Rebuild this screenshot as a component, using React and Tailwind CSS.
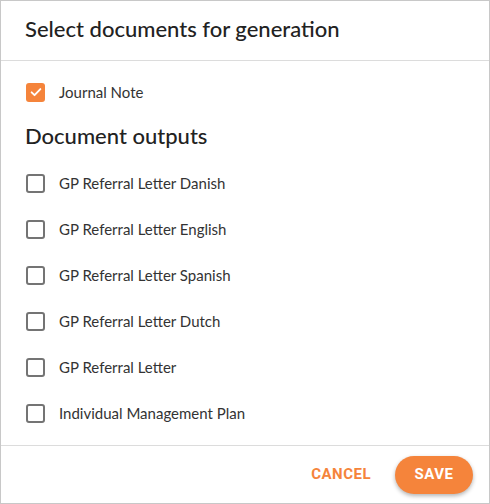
import React, { useState } from 'react';

const outputs = [
    'GP Referral Letter Danish',
    'GP Referral Letter English',
    'GP Referral Letter Spanish',
    'GP Referral Letter Dutch',
    'GP Referral Letter',
    'Individual Management Plan',
];

const Box = ({ checked, onClick, label }) => {
    return (
        <button onClick={onClick} className="flex flex-row items-center h-[46px] w-full text-left">
            {checked ? (
                <span className="w-[19px] h-[19px] rounded-[3px] bg-[#f5843b] flex items-center justify-center ml-[25px]">
                    <svg width="14" height="14" viewBox="0 0 24 24" fill="none" stroke="white" strokeWidth="3.2" strokeLinecap="round" strokeLinejoin="round">
                        <path d="M4.5 12.5l5 5L19.5 7" />
                    </svg>
                </span>
            ) : (
                <span className="w-[19px] h-[19px] rounded-[3px] border-2 border-[#747474] ml-[25px]"></span>
            )}
            <span className="ml-[14px] text-[15px] text-[#333]">{label}</span>
        </button>
    );
};

const App = () => {
    const [journal, setJournal] = useState(true);
    const [checked, setChecked] = useState({});

    return (
        <div className="w-[490px] h-[504px] border border-[#c8c8c8] bg-white flex flex-col font-['Lato','Noto_Sans',sans-serif]">
            <div className="h-[60px] border-b border-[#dcdcdc] flex items-center px-6">
                <h1 className="text-[22px] font-medium text-[#222] mt-[-4px]">Select documents for generation</h1>
            </div>

            <div className="flex-1 flex flex-col pt-[8px]">
                <Box checked={journal} onClick={() => setJournal(!journal)} label="Journal Note" />
                <h2 className="text-[22px] font-medium text-[#222] px-6 mt-[4px] mb-[8px]">Document outputs</h2>
                {outputs.map((o) => (
                    <Box key={o} checked={!!checked[o]} onClick={() => setChecked({ ...checked, [o]: !checked[o] })} label={o} />
                ))}
            </div>

            <div className="h-[58px] border-t border-[#dcdcdc] flex flex-row items-center justify-end pr-[16px] gap-[24px] font-['Roboto',sans-serif]">
                <button className="text-[#f5843b] font-bold text-[15px] tracking-[0.5px]">CANCEL</button>
                <button className="bg-[#f5843b] text-white font-bold text-[15px] tracking-[0.5px] h-[38px] w-[78px] rounded-full shadow-[0_2px_4px_rgba(0,0,0,0.3)]">SAVE</button>
            </div>
        </div>
    );
};

export default App;
